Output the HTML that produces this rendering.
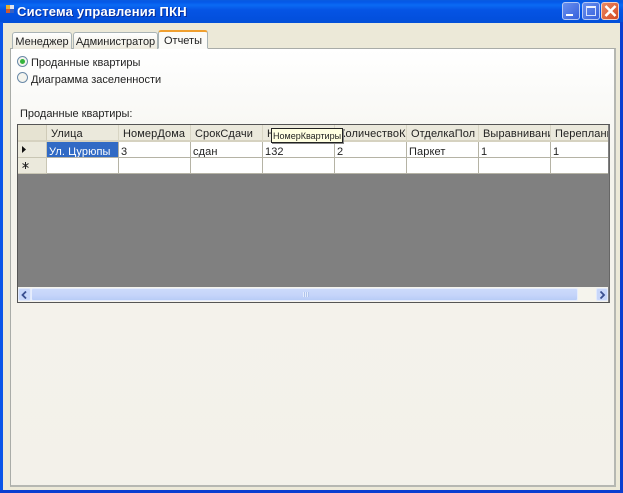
<!DOCTYPE html>
<html><head><meta charset="utf-8"><style>
html,body{margin:0;padding:0;background:#fff}
#w{position:relative;width:623px;height:493px;overflow:hidden;font-family:"Liberation Sans","DejaVu Sans",sans-serif;font-size:11px;color:#222;background:#ece9d8;filter:blur(.3px)}
#w div{position:absolute;box-sizing:border-box;white-space:nowrap}
.hc{top:125px;height:17px;background:#ebe9dc;border-right:1px solid #d8d5c4;border-bottom:2px solid #d6d2c0;padding:3px 0 0 4px;overflow:hidden;line-height:13px;letter-spacing:.1px}
.c{height:16px;background:#fff;border-right:1px solid #b5b3a5;border-bottom:1px solid #b5b3a5;padding:4px 0 0 2px;overflow:hidden;line-height:12px;letter-spacing:.1px}
.tab{background:linear-gradient(#fff,#ece9dd);border:1px solid #a9b3b5;border-bottom:none;border-radius:3px 3px 0 0;text-align:center;padding-top:3px}
</style></head><body><div id="w">
<div style="left:0;top:0;width:623px;height:23px;background:linear-gradient(#0a5be0 0,#0458e8 2px,#0a6af4 5px,#0554e4 10px,#0350de 18px,#0350d8 23px)"></div>
<div style="left:6px;top:5px;width:4px;height:4px;background:#e8b030"></div>
<div style="left:10px;top:5px;width:4px;height:4px;background:#e0e4f0"></div>
<div style="left:6px;top:9px;width:4px;height:4px;background:#d05a30"></div>
<div style="left:10px;top:9px;width:4px;height:4px;background:#3a60c0"></div>
<div style="left:17px;top:4px;font-size:13px;line-height:16px;font-weight:bold;color:#fff;text-shadow:1px 1px 0 #0a2f9a;letter-spacing:.2px">Система управления ПКН</div>
<div style="left:562px;top:2px;width:18px;height:18px;background:linear-gradient(135deg,#6a90ee,#3560dc);border:1px solid #b5c8f4;border-radius:3px"></div>
<div style="left:566px;top:14px;width:7px;height:2px;background:#fff"></div>
<div style="left:582px;top:2px;width:18px;height:18px;background:linear-gradient(135deg,#6a90ee,#3560dc);border:1px solid #b5c8f4;border-radius:3px"></div>
<div style="left:586px;top:6px;width:10px;height:10px;border:1px solid #d8e2fc;border-top:2px solid #eef2ff"></div>
<div style="left:601px;top:2px;width:18px;height:18px;background:linear-gradient(135deg,#ea8a66,#d5481f);border:1px solid #f2d0c4;border-radius:3px"></div>
<svg style="position:absolute;left:604px;top:5px" width="13" height="12"><path d="M1.500 1L11.500 11M11.500 1L1.500 11" stroke="#fff" stroke-width="2.600" fill="none"/></svg>
<div style="left:0;top:22px;width:3px;height:471px;background:#0a55e8"></div>
<div style="left:620px;top:22px;width:3px;height:471px;background:#0a3fd0"></div>
<div style="left:0;top:490px;width:623px;height:3px;background:#0a3ed0"></div>

<div style="left:10px;top:48px;width:606px;height:439px;background:linear-gradient(#fff 0,#fbfbf9 40px,#f4f3ec 130px,#f3f1ea 100%);border:1px solid #a9aca8;border-width:1px 2px 2px 1px;border-right-color:#b5b7b2;border-bottom-color:#b5b7b2"></div>
<div class="tab" style="left:12px;top:32px;width:60px;height:17px">Менеджер</div>
<div class="tab" style="left:73px;top:32px;width:85px;height:17px">Администратор</div>
<div class="tab" style="left:158px;top:30px;width:50px;height:19px;background:#fbfbf8;border-top:2px solid #f0a030;border-bottom:1px solid #fbfbf8;padding-top:3px">Отчеты</div>

<div style="left:17px;top:56px;width:11px;height:11px;border-radius:50%;border:1px solid #6a8aa8;background:#f4f4ee"></div>
<div style="left:20px;top:59px;width:5px;height:5px;border-radius:50%;background:#34b43c"></div>
<div style="left:31px;top:57px;line-height:13px">Проданные квартиры</div>
<div style="left:17px;top:72px;width:11px;height:11px;border-radius:50%;border:1px solid #6a8aa8;background:#f4f4ee"></div>
<div style="left:31px;top:74px;line-height:13px">Диаграмма заселенности</div>
<div style="left:20px;top:108px;line-height:13px">Проданные квартиры:</div>

<div style="left:17px;top:124px;width:593px;height:179px;background:#808080;border:1px solid #555;border-right-color:#666"></div>
<div style="left:18px;top:125px;width:29px;height:17px;background:#e6e3d2;border-right:1px solid #cfcbb8;border-bottom:2px solid #d6d2c0"></div>
<div class="hc" style="left:47px;width:72px">Улица</div>
<div class="hc" style="left:119px;width:72px">НомерДома</div>
<div class="hc" style="left:191px;width:72px">СрокСдачи</div>
<div class="hc" style="left:263px;width:72px">Н</div>
<div class="hc" style="left:335px;width:72px">КоличествоК</div>
<div class="hc" style="left:407px;width:72px">ОтделкаПол</div>
<div class="hc" style="left:479px;width:72px">Выравнивани</div>
<div class="hc" style="left:551px;width:57px;border-right:none">Переплани</div>

<div style="left:18px;top:142px;width:29px;height:16px;background:#ebe9dc;border-bottom:1px solid #c9c6b4;border-right:1px solid #c9c6b4"></div>
<svg style="position:absolute;left:22px;top:146px" width="6" height="8"><path d="M0 0L4 3.500L0 7Z" fill="#111"/></svg>
<div class="c" style="left:47px;top:142px;width:72px;background:#316ac5;color:#fff">Ул. Цурюпы</div>
<div class="c" style="left:119px;top:142px;width:72px">3</div>
<div class="c" style="left:191px;top:142px;width:72px">сдан</div>
<div class="c" style="left:263px;top:142px;width:72px">132</div>
<div class="c" style="left:335px;top:142px;width:72px">2</div>
<div class="c" style="left:407px;top:142px;width:72px">Паркет</div>
<div class="c" style="left:479px;top:142px;width:72px">1</div>
<div class="c" style="left:551px;top:142px;width:57px;border-right:none">1</div>

<div style="left:18px;top:158px;width:29px;height:16px;background:#ebe9dc;border-bottom:1px solid #c9c6b4;border-right:1px solid #c9c6b4"></div>
<svg style="position:absolute;left:21px;top:161px" width="9" height="9"><path d="M4.500 1V8M1.500 2.500L7.500 6.500M7.500 2.500L1.500 6.500" stroke="#222" stroke-width="1" fill="none"/></svg>
<div class="c" style="left:47px;top:158px;width:72px"></div>
<div class="c" style="left:119px;top:158px;width:72px"></div>
<div class="c" style="left:191px;top:158px;width:72px"></div>
<div class="c" style="left:263px;top:158px;width:72px"></div>
<div class="c" style="left:335px;top:158px;width:72px"></div>
<div class="c" style="left:407px;top:158px;width:72px"></div>
<div class="c" style="left:479px;top:158px;width:72px"></div>
<div class="c" style="left:551px;top:158px;width:57px;border-right:none"></div>

<div style="left:271px;top:128px;width:72px;height:15px;background:#ffffe1;border:1px solid #222;box-shadow:1px 1px 0 #888;font-size:9px;line-height:11px;padding:2px 0 0 1px;overflow:hidden;color:#222">НомерКвартиры</div>

<div style="left:18px;top:287px;width:590px;height:15px;background:#f5f4ed"></div>
<div style="left:18px;top:288px;width:13px;height:13px;background:#c8d7fa;border:1px solid #e2eafc;border-radius:2px"></div>
<svg style="position:absolute;left:21px;top:291px" width="7" height="8"><path d="M5 .500L1.500 4L5 7.500" stroke="#3a4f90" stroke-width="1.800" fill="none"/></svg>
<div style="left:31px;top:288px;width:547px;height:13px;background:linear-gradient(#ccdafb,#c4d4fa 60%,#b8ccf6);border:1px solid #e6edfd;border-radius:2px"></div>
<div style="left:303px;top:292px;width:6px;height:5px;background:repeating-linear-gradient(90deg,#e4ecfd 0 1px,#b0c4ec 1px 2px)"></div>
<div style="left:596px;top:288px;width:12px;height:13px;background:#c8d7fa;border:1px solid #e2eafc;border-radius:2px"></div>
<svg style="position:absolute;left:599px;top:291px" width="7" height="8"><path d="M1.500 .500L5 4L1.500 7.500" stroke="#3a4f90" stroke-width="1.800" fill="none"/></svg>
</div></body></html>
